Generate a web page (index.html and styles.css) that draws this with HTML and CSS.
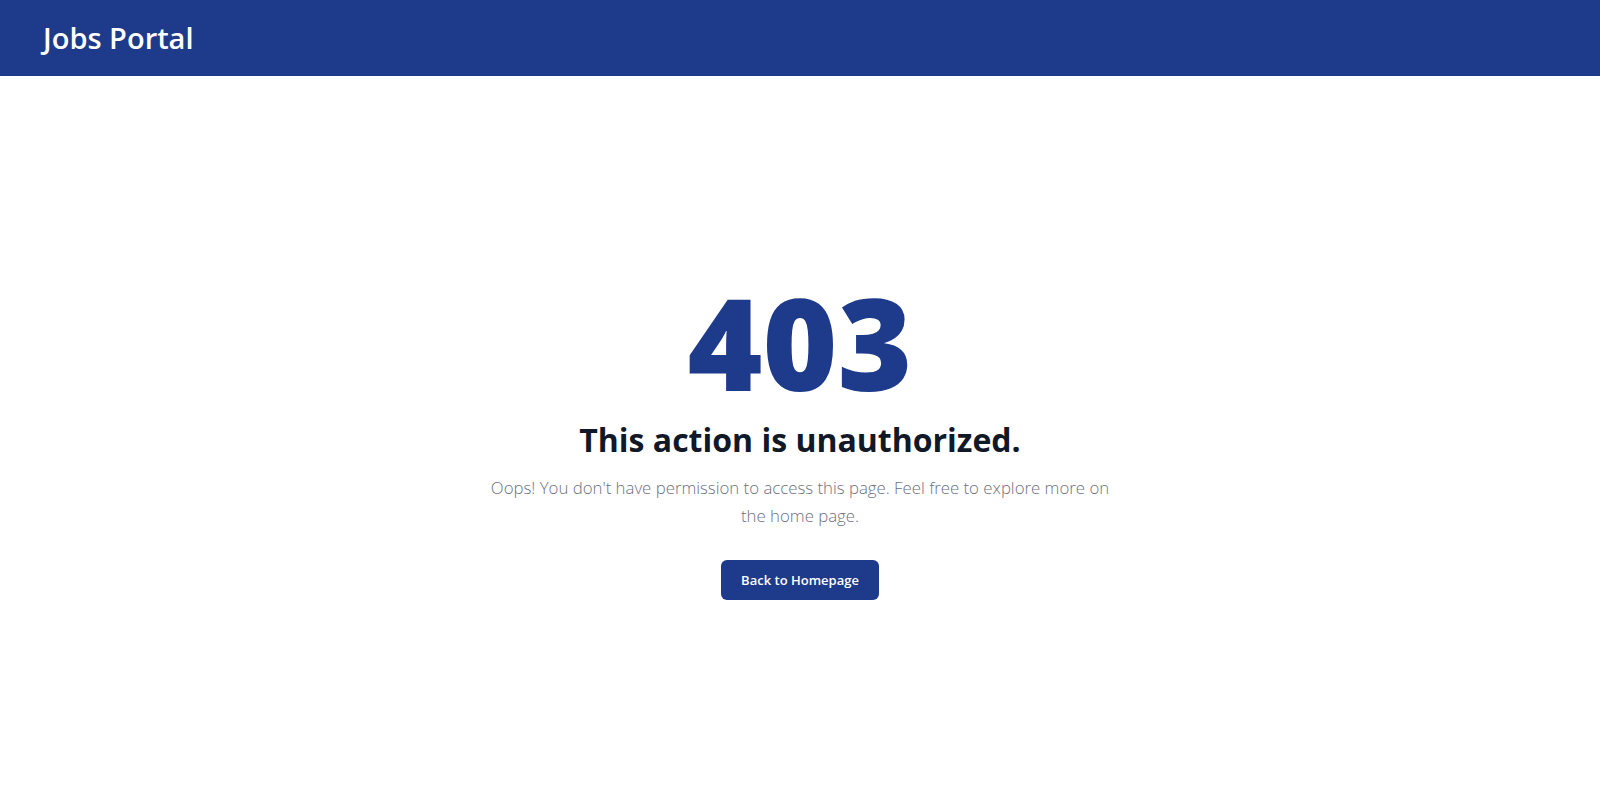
FILE: index.html
```html
<!DOCTYPE html>
<html lang="en">
<head>
<meta charset="utf-8">
<title>403 - Jobs Portal</title>
<link rel="stylesheet" href="styles.css">
</head>
<body>
<header class="topbar">
  <a class="brand" href="#">Jobs Portal</a>
</header>
<main class="error-page">
  <div class="error-box">
    <h1 class="error-code">403</h1>
    <h2 class="error-title">This action is unauthorized.</h2>
    <p class="error-text">Oops! You don't have permission to access this page. Feel free to explore more on the home page.</p>
    <a class="btn-home" href="#">Back to Homepage</a>
  </div>
</main>
</body>
</html>
```
FILE: styles.css
```css
* { box-sizing: border-box; }
html, body { margin: 0; padding: 0; }
body {
  font-family: "Open Sans", "Noto Sans", sans-serif;
  background: #ffffff;
  color: #111827;
}
.topbar {
  background: #1e3a8a;
  height: 76px;
  display: flex;
  align-items: center;
  padding: 0 43px;
}
.brand {
  color: #ffffff;
  text-decoration: none;
  font-size: 29px;
  line-height: 36px;
  font-weight: 600;
}
.error-page {
  min-height: 735px;
  display: flex;
  align-items: center;
  justify-content: center;
}
.error-box {
  display: flex;
  flex-direction: column;
  align-items: center;
  text-align: center;
  padding-bottom: 10px;
}
.error-code {
  margin: 0;
  font-size: 128px;
  line-height: 128px;
  font-weight: 800;
  color: #1e3a8a;
}
.error-title {
  margin: 14px 0 0;
  font-size: 32px;
  line-height: 40px;
  font-weight: 700;
  color: #111827;
}
.error-text {
  margin: 14px 0 0;
  max-width: 640px;
  font-size: 16.8px;
  line-height: 28px;
  font-weight: 300;
  color: #6b7280;
}
.btn-home {
  margin-top: 30px;
  display: inline-block;
  background: #1e3a8a;
  color: #ffffff;
  text-decoration: none;
  font-size: 13px;
  line-height: 20px;
  font-weight: 600;
  padding: 10px 20px;
  border-radius: 6px;
}
```
